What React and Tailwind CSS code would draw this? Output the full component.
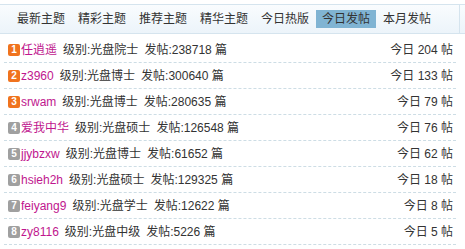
import React from "react";

const tabs = ["最新主题", "精彩主题", "推荐主题", "精华主题", "今日热版", "今日发帖", "本月发帖"];

const rows = [
  { name: "任逍遥", level: "光盘院士", posts: 238718, today: 204 },
  { name: "z3960", level: "光盘博士", posts: 300640, today: 133 },
  { name: "srwam", level: "光盘博士", posts: 280635, today: 79 },
  { name: "爱我中华", level: "光盘硕士", posts: 126548, today: 76 },
  { name: "jjybzxw", level: "光盘博士", posts: 61652, today: 62 },
  { name: "hsieh2h", level: "光盘硕士", posts: 129325, today: 18 },
  { name: "feiyang9", level: "光盘学士", posts: 12622, today: 8 },
  { name: "zy8116", level: "光盘中级", posts: 5226, today: 5 },
];

const App = () => {
  return (
    <div className="w-[465px] h-[249px] bg-white overflow-hidden text-[12px] text-[#333] font-['Liberation_Sans','Noto_Sans_CJK_SC',sans-serif]">
      {/* Tab bar */}
      <div className="mt-[4px] h-[30px] border-y border-[#d5e4ee] bg-gradient-to-b from-[#f9fcfe] to-[#ecf4fa]">
        <div className="w-[460px] h-full border-r border-[#d5e4ee] flex items-center pl-[11px] gap-px">
          {tabs.map((t) => (
            <div
              key={t}
              className={`h-[18px] leading-[18px] px-[6px] whitespace-nowrap ${t === "今日发帖" ? "bg-[#80b4d3]" : ""}`}
            >
              {t}
            </div>
          ))}
        </div>
      </div>

      {/* List */}
      <div className="mt-[3px] ml-[4px] w-[452px]">
        {rows.map((r, i) => (
          <div
            key={r.name}
            className="h-[26px] border-b border-dashed border-[#cddde5] flex items-center pl-[4px] pr-[3px] whitespace-nowrap"
          >
            <span
              className={`w-[12px] h-[12px] rounded-[2px] flex items-center justify-center text-white text-[10px] font-bold leading-none ${i < 3 ? "bg-[#f0731e]" : "bg-[#a0a0a0]"}`}
            >
              {i + 1}
            </span>
            <span className="ml-px text-[#c0168e]">{r.name}</span>
            <span className="ml-[6px]">级别:{r.level}</span>
            <span className="ml-[6px]">发帖:{r.posts} 篇</span>
            <span className="ml-auto">今日 {r.today} 帖</span>
          </div>
        ))}
      </div>
    </div>
  );
};

export default App;
